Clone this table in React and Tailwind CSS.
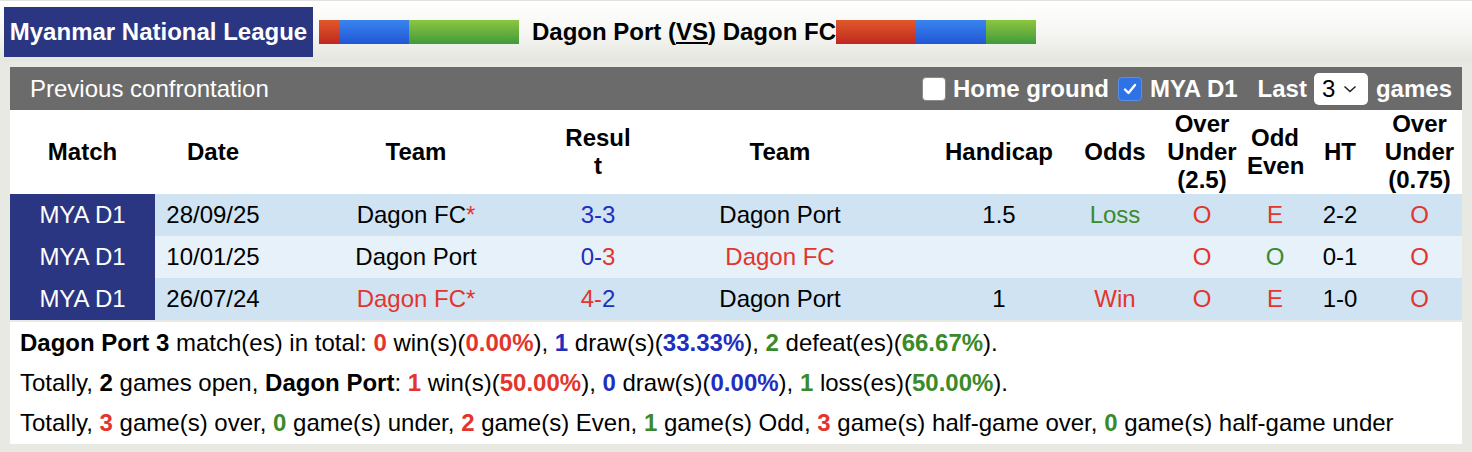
import React from "react";

const R = "text-[#e3352d]";
const B = "text-[#1f2fc0]";
const G = "text-[#3a8a2c]";

function Bars({ a, b, c }) {
  return (
    <div className="flex h-[24px] shrink-0">
      <div className="h-full bg-gradient-to-b from-[#e0582a] to-[#c0261f]" style={{ width: a }} />
      <div className="h-full bg-gradient-to-b from-[#3a84ee] to-[#2356d6]" style={{ width: b }} />
      <div className="h-full bg-gradient-to-b from-[#8cc63f] to-[#3f9a3c]" style={{ width: c }} />
    </div>
  );
}

const rows = [
  {
    bg: "bg-[#cfe3f3]",
    date: "28/09/25",
    home: <span>Dagon FC<span className={R}>*</span></span>,
    res: <><span className={B}>3-</span><span className={B}>3</span></>,
    away: <span>Dagon Port</span>,
    hc: "1.5",
    odds: <span className={G}>Loss</span>,
    ou: <span className={R}>O</span>,
    oe: <span className={R}>E</span>,
    ht: "2-2",
    ou2: <span className={R}>O</span>,
  },
  {
    bg: "bg-[#e6f1fa]",
    date: "10/01/25",
    home: <span>Dagon Port</span>,
    res: <><span className={B}>0-</span><span className={R}>3</span></>,
    away: <span className={R}>Dagon FC</span>,
    hc: "",
    odds: null,
    ou: <span className={R}>O</span>,
    oe: <span className={G}>O</span>,
    ht: "0-1",
    ou2: <span className={R}>O</span>,
  },
  {
    bg: "bg-[#cfe3f3]",
    date: "26/07/24",
    home: <span className={R}>Dagon FC*</span>,
    res: <><span className={R}>4-</span><span className={B}>2</span></>,
    away: <span>Dagon Port</span>,
    hc: "1",
    odds: <span className={R}>Win</span>,
    ou: <span className={R}>O</span>,
    oe: <span className={R}>E</span>,
    ht: "1-0",
    ou2: <span className={R}>O</span>,
  },
];

export default function App() {
  return (
    <div className="w-[1472px] h-[452px] overflow-hidden bg-[#e9e9e3] font-['Liberation_Sans',Arial,sans-serif] text-black">
      {/* Top bar */}
      <div className="h-[62px] flex items-center pl-[4px] bg-gradient-to-b from-[#ffffff] via-[#f6f6f3] to-[#e6e6e0] border-t border-[#e2e2e2]">
        <div className="w-[309px] h-[50px] bg-[#2b3682] text-white font-bold text-[24px] flex items-center justify-center shrink-0 whitespace-nowrap">
          Myanmar National League
        </div>
        <div className="ml-[6px]">
          <Bars a={20} b={70} c={110} />
        </div>
        <div className="ml-[13px] font-bold text-[24px] whitespace-nowrap">
          Dagon Port (<span className="underline underline-offset-2">VS</span>) Dagon FC
        </div>
        <Bars a={80} b={70} c={50} />
      </div>

      {/* Panel */}
      <div className="mx-[10px] mt-[5px]">
        <div className="h-[43px] bg-[#6b6b6b] flex items-center pl-[20px] pr-[10px] text-white text-[24px] whitespace-nowrap">
          <div className="flex-1">Previous confrontation</div>
          <div className="flex items-center font-bold shrink-0">
            <span className="block shrink-0 w-[24px] h-[24px] rounded-[4px] bg-white border border-[#8a8a8a]" />
            <span className="ml-[7px]">Home ground</span>
            <span className="shrink-0 ml-[9px] w-[24px] min-w-[24px] h-[24px] rounded-[4px] bg-[#2f72e6] border border-[#5a8fe8] flex items-center justify-center">
              <svg width="16" height="16" viewBox="0 0 16 16" className="block">
                <path d="M3 8.5 L6.5 12 L13 4" fill="none" stroke="white" strokeWidth="2.4" strokeLinecap="round" strokeLinejoin="round" />
              </svg>
            </span>
            <span className="ml-[8px]">MYA D1</span>
            <span className="ml-[20px]">Last</span>
            <span className="shrink-0 ml-[7px] w-[54px] h-[32px] rounded-[5px] bg-white text-black font-normal flex items-center pl-[8px] gap-[8px]">
              <span>3</span>
              <svg width="14" height="10" viewBox="0 0 14 10">
                <path d="M1.5 2.5 L7 7.5 L12.5 2.5" fill="none" stroke="#222" strokeWidth="1.6" />
              </svg>
            </span>
            <span className="ml-[8px]">games</span>
          </div>
        </div>

        <table className="w-[1452px] table-fixed border-collapse text-[24px]">
          <colgroup>
            <col className="w-[145px]" />
            <col className="w-[116px]" />
            <col className="w-[290px]" />
            <col className="w-[74px]" />
            <col className="w-[290px]" />
            <col className="w-[148px]" />
            <col className="w-[84px]" />
            <col className="w-[90px]" />
            <col className="w-[56px]" />
            <col className="w-[74px]" />
            <col className="w-[85px]" />
          </colgroup>
          <thead>
            <tr className="h-[84px] bg-white font-bold leading-[28px] text-center">
              <th>Match</th>
              <th>Date</th>
              <th>Team</th>
              <th>Resul t</th>
              <th>Team</th>
              <th>Handicap</th>
              <th>Odds</th>
              <th>Over Under (2.5)</th>
              <th>Odd Even</th>
              <th>HT</th>
              <th>Over Under (0.75)</th>
            </tr>
          </thead>
          <tbody>
            {rows.map((r, i) => (
              <tr key={i} className={`h-[42px] text-center ${r.bg}`}>
                <td className="bg-[#2b3682] text-white">MYA D1</td>
                <td>{r.date}</td>
                <td>{r.home}</td>
                <td>{r.res}</td>
                <td>{r.away}</td>
                <td>{r.hc}</td>
                <td>{r.odds}</td>
                <td>{r.ou}</td>
                <td>{r.oe}</td>
                <td>{r.ht}</td>
                <td>{r.ou2}</td>
              </tr>
            ))}
          </tbody>
        </table>

        <div className="mt-[2px] bg-white pl-[10px] py-[1px] text-[24px] leading-[40px] whitespace-nowrap">
          <div>
            <b>Dagon Port 3</b> match(es) in total: <b className={R}>0</b> win(s)(<b className={R}>0.00%</b>), <b className={B}>1</b> draw(s)(<b className={B}>33.33%</b>), <b className={G}>2</b> defeat(es)(<b className={G}>66.67%</b>).
          </div>
          <div>
            Totally, <b>2</b> games open, <b>Dagon Port</b>: <b className={R}>1</b> win(s)(<b className={R}>50.00%</b>), <b className={B}>0</b> draw(s)(<b className={B}>0.00%</b>), <b className={G}>1</b> loss(es)(<b className={G}>50.00%</b>).
          </div>
          <div>
            Totally, <b className={R}>3</b> game(s) over, <b className={G}>0</b> game(s) under, <b className={R}>2</b> game(s) Even, <b className={G}>1</b> game(s) Odd, <b className={R}>3</b> game(s) half-game over, <b className={G}>0</b> game(s) half-game under
          </div>
        </div>
      </div>
    </div>
  );
}
